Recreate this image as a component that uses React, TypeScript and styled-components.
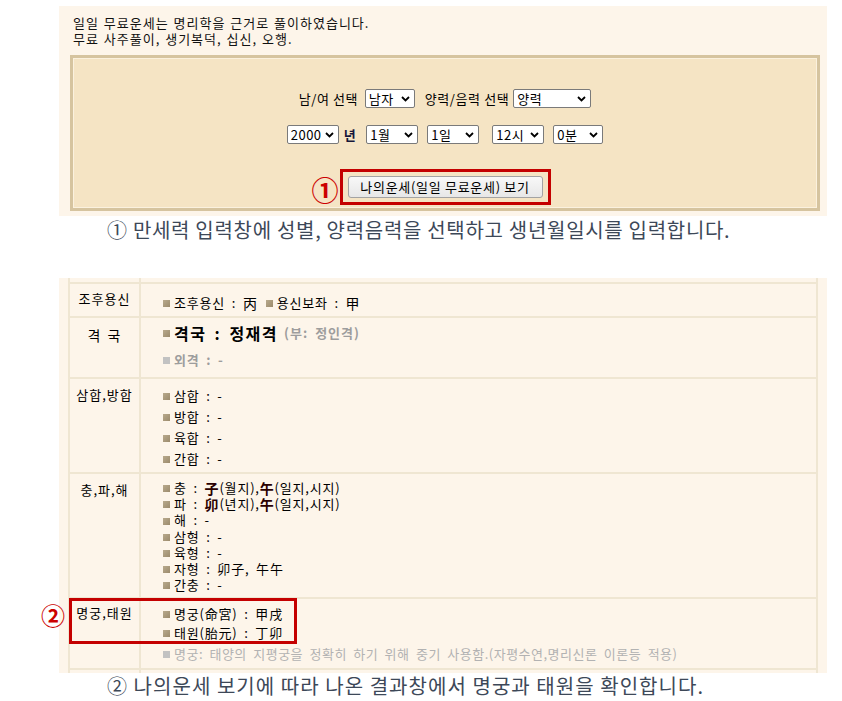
import React from "react";
import styled, { createGlobalStyle } from "styled-components";

const Global = createGlobalStyle`
  html, body { margin: 0; padding: 0; background: #ffffff; }
  body { font-family: "Noto Sans CJK KR", "Noto Sans", sans-serif; color: #000; }
`;

const Page = styled.div`
  width: 842px;
  height: 701px;
  overflow: hidden;
  display: flex;
  flex-direction: column;
`;

const TopPanel = styled.section`
  margin: 6px 0 0 59px;
  width: 768px;
  height: 210px;
  box-sizing: border-box;
  background: #fdf5ea;
  padding: 9px 0 0 11px;
`;

const Intro = styled.p`
  margin: 0;
  padding-left: 3px;
  font-size: 13px;
  line-height: 16px;
  letter-spacing: 1px;
  word-spacing: 1px;
  color: #111;
`;

const FormBox = styled.div`
  margin-top: 8px;
  width: 750px;
  height: 156px;
  box-sizing: border-box;
  border: 3px solid #d6c49f;
  box-shadow: inset 0 0 0 1px #fbf1de;
  background: #f5e4c4;
  padding-top: 30px;
  display: flex;
  flex-direction: column;
  align-items: center;
`;

const Row = styled.div<{ $mt?: number }>`
  display: flex;
  align-items: center;
  height: 20px;
  margin-top: ${(p) => p.$mt ?? 0}px;
  font-size: 13px;
  letter-spacing: 0.6px;
  color: #000;
`;

const Label = styled.span<{ $ml?: number; $bold?: boolean }>`
  margin-left: ${(p) => p.$ml ?? 0}px;
  font-weight: ${(p) => (p.$bold ? 700 : 400)};
  color: ${(p) => (p.$bold ? "#16163a" : "#000")};
  white-space: pre;
`;

const SelectWrap = styled.span<{ $w: number; $ml?: number }>`
  position: relative;
  display: inline-block;
  width: ${(p) => p.$w}px;
  height: 19px;
  margin-left: ${(p) => p.$ml ?? 0}px;
`;

const NativeSelect = styled.select`
  appearance: none;
  -webkit-appearance: none;
  width: 100%;
  height: 100%;
  box-sizing: border-box;
  border: 1px solid #7a7a7a;
  border-radius: 2px;
  background: #ffffff;
  font-family: "Noto Sans CJK KR", "Liberation Sans", sans-serif;
  font-size: 13px;
  letter-spacing: 0.5px;
  line-height: 17px;
  padding: 0 0 0 3px;
  color: #000;
  outline: none;
`;

const Chevron = styled.svg`
  position: absolute;
  right: 5px;
  top: 7px;
  width: 9px;
  height: 6px;
  pointer-events: none;
`;

const ButtonWrap = styled.div`
  position: relative;
  margin-top: 25px;
  border: 3px solid #c40000;
  padding: 4px 5px;
  display: flex;
`;

const RunButton = styled.button`
  width: 195px;
  height: 22px;
  box-sizing: border-box;
  border: 1px solid #a3a3a3;
  border-radius: 3px;
  background: linear-gradient(#f8f8f8, #e7e7e7);
  font-family: "Noto Sans CJK KR", "Liberation Sans", sans-serif;
  font-size: 13px;
  letter-spacing: 0.7px;
  line-height: 18px;
  color: #000;
  padding: 0;
`;

const Marker = styled.span<{ $size: number; $top: number; $gap: number }>`
  position: absolute;
  right: calc(100% + ${(p) => p.$gap}px);
  top: ${(p) => p.$top}px;
  font-size: ${(p) => p.$size}px;
  line-height: 1;
  font-weight: 700;
  color: #cc0000;
  white-space: nowrap;
`;

const Caption = styled.p<{ $lh: number; $ls: number }>`
  margin: 0 0 0 107px;
  font-size: 20px;
  line-height: ${(p) => p.$lh}px;
  letter-spacing: ${(p) => p.$ls}px;
  color: #3d4858;
  white-space: nowrap;
`;

const BottomPanel = styled.section`
  margin: 34px 0 0 59px;
  width: 768px;
  height: 395px;
  box-sizing: border-box;
  background: #fdf5ea;
  padding-left: 9px;
  flex-shrink: 0;
`;

const Table = styled.div`
  width: 750px;
  box-sizing: border-box;
  display: grid;
  grid-template-columns: 69px 675px;
  grid-template-rows: 4px 32px 59px 93px 123px 69px 3px;
  gap: 2px;
  padding: 0 2px;
  background: #efe6d2;
`;

const Cell = styled.div`
  background: #fdf5ea;
`;

const LabelCell = styled.div<{ $pt: number; $size?: number }>`
  position: relative;
  background: #fdf5ea;
  text-align: center;
  padding-top: ${(p) => p.$pt}px;
  font-size: ${(p) => p.$size ?? 13}px;
  letter-spacing: 1px;
  word-spacing: 2px;
  line-height: 16px;
  color: #000;
  white-space: nowrap;
`;

const ContentCell = styled.div<{ $pt: number; $lh: number }>`
  background: #fdf5ea;
  padding: ${(p) => p.$pt}px 0 0 22px;
  font-size: 13px;
  letter-spacing: 0.8px;
  word-spacing: 3px;
  line-height: ${(p) => p.$lh}px;
  color: #000;
  white-space: nowrap;
`;

const Line = styled.div<{ $mt?: number; $tone?: "main" | "muted" | "note"; $bold?: boolean; $size?: number; $ls?: number }>`
  display: flex;
  align-items: center;
  margin-top: ${(p) => p.$mt ?? 0}px;
  font-size: ${(p) => p.$size ?? 13}px;
  ${(p) => (p.$ls !== undefined ? `letter-spacing: ${p.$ls}px;` : "")}
  font-weight: ${(p) => (p.$bold ? 700 : 400)};
  color: ${(p) => (p.$tone === "muted" ? "#9d9d9d" : p.$tone === "note" ? "#b2b2b2" : "#000")};
`;

const Bullet = styled.span<{ $gray?: boolean; $ml?: number }>`
  display: inline-block;
  width: 7px;
  height: 7px;
  margin: 1px 4px 0 ${(p) => p.$ml ?? 0}px;
  background: ${(p) => (p.$gray ? "#c2c2c2" : "linear-gradient(135deg, #b8a98c, #9c8b6c)")};
  flex-shrink: 0;
`;

const Han = styled.span<{ $bold?: boolean }>`
  font-size: 14px;
  font-weight: ${(p) => (p.$bold ? 700 : 400)};
  color: ${(p) => (p.$bold ? "#2a0000" : "#000")};
`;

const Sub = styled.span`
  margin-left: 6px;
  font-size: 13px;
  letter-spacing: 1px;
  word-spacing: 3px;
  font-weight: 700;
  color: #9d9d9d;
`;

const Pre = styled.span`
  white-space: pre;
`;

const RedBox = styled.div`
  position: absolute;
  left: -1px;
  top: -1px;
  width: 228px;
  height: 46px;
  box-sizing: border-box;
  border: 3px solid #c40000;
  pointer-events: none;
`;

const ChevronIcon = () => (
  <Chevron viewBox="0 0 9 6">
    <path d="M1 1 L4.5 4.5 L8 1" fill="none" stroke="#000" strokeWidth="1.8" />
  </Chevron>
);

type SelProps = { w: number; ml?: number; options: string[] };
const Select = ({ w, ml, options }: SelProps) => (
  <SelectWrap $w={w} $ml={ml}>
    <NativeSelect defaultValue={options[0]}>
      {options.map((o) => (
        <option key={o} value={o}>
          {o}
        </option>
      ))}
    </NativeSelect>
    <ChevronIcon />
  </SelectWrap>
);

const samhap = ["삼합 : -", "방합 : -", "육합 : -", "간합 : -"];

export default function App() {
  return (
    <Page>
      <Global />
      <TopPanel>
        <Intro>
          일일 무료운세는 명리학을 근거로 풀이하였습니다.
          <br />
          무료 사주풀이, 생기복덕, 십신, 오행.
        </Intro>
        <FormBox>
          <Row>
            <Label>남/여 선택 </Label>
            <Select w={50} ml={3} options={["남자", "여자"]} />
            <Label $ml={10}>양력/음력 선택</Label>
            <Select w={78} ml={4} options={["양력", "음력", "음력(윤달)"]} />
          </Row>
          <Row $mt={16}>
            <Select w={52} options={["2000", "2001"]} />
            <Label $ml={5} $bold>
              년
            </Label>
            <Select w={52} ml={10} options={["1월", "2월"]} />
            <Select w={52} ml={9} options={["1일", "2일"]} />
            <Select w={52} ml={13} options={["12시", "1시"]} />
            <Select w={50} ml={9} options={["0분", "1분"]} />
          </Row>
          <ButtonWrap>
            <Marker $size={27} $top={4} $gap={4}>
              ①
            </Marker>
            <RunButton type="button">나의운세(일일 무료운세) 보기</RunButton>
          </ButtonWrap>
        </FormBox>
      </TopPanel>

      <Caption $lh={28} $ls={0.7}>
        ① 만세력 입력창에 성별, 양력음력을 선택하고 생년월일시를 입력합니다.
      </Caption>

      <BottomPanel>
        <Table>
          <Cell />
          <Cell />

          <LabelCell $pt={7}>조후용신</LabelCell>
          <ContentCell $pt={11} $lh={16}>
            <Line>
              <Bullet />
              <Pre>조후용신 : </Pre>
              <Han>丙</Han>
              <Bullet $ml={8} />
              <Pre>용신보좌 : </Pre>
              <Han>甲</Han>
            </Line>
          </ContentCell>

          <LabelCell $pt={9} $size={14}>
            격 국
          </LabelCell>
          <ContentCell $pt={5} $lh={20}>
            <Line $bold $size={16} $ls={1.5}>
              <Bullet />
              <Pre>격국 : 정재격</Pre>
              <Sub>(부: 정인격)</Sub>
            </Line>
            <Line $mt={7} $bold $tone="muted" $size={13}>
              <Bullet $gray />
              <Pre>외격 : -</Pre>
            </Line>
          </ContentCell>

          <LabelCell $pt={8}>삼합,방합</LabelCell>
          <ContentCell $pt={6} $lh={21}>
            {samhap.map((s) => (
              <Line key={s}>
                <Bullet />
                <Pre>{s}</Pre>
              </Line>
            ))}
          </ContentCell>

          <LabelCell $pt={8}>충,파,해</LabelCell>
          <ContentCell $pt={6} $lh={16.2}>
            <Line>
              <Bullet />
              <Pre>충 : </Pre>
              <Han $bold>子</Han>
              <Pre>(월지),</Pre>
              <Han $bold>午</Han>
              <Pre>(일지,시지)</Pre>
            </Line>
            <Line>
              <Bullet />
              <Pre>파 : </Pre>
              <Han $bold>卯</Han>
              <Pre>(년지),</Pre>
              <Han $bold>午</Han>
              <Pre>(일지,시지)</Pre>
            </Line>
            <Line>
              <Bullet />
              <Pre>해 : -</Pre>
            </Line>
            <Line>
              <Bullet />
              <Pre>삼형 : -</Pre>
            </Line>
            <Line>
              <Bullet />
              <Pre>육형 : -</Pre>
            </Line>
            <Line>
              <Bullet />
              <Pre>자형 : 卯子, 午午</Pre>
            </Line>
            <Line>
              <Bullet />
              <Pre>간충 : -</Pre>
            </Line>
          </ContentCell>

          <LabelCell $pt={6}>
            명궁,태원
            <RedBox />
            <Marker $size={24} $top={4} $gap={4}>
              ②
            </Marker>
          </LabelCell>
          <ContentCell $pt={5} $lh={19}>
            <Line>
              <Bullet />
              <Pre>명궁(命宮) : 甲戌</Pre>
            </Line>
            <Line>
              <Bullet />
              <Pre>태원(胎元) : 丁卯</Pre>
            </Line>
            <Line $mt={2} $tone="note" $size={13} $ls={0.5}>
              <Bullet $gray />
              <Pre>명궁: 태양의 지평궁을 정확히 하기 위해 중기 사용함.(자평수연,명리신론 이론등 적용)</Pre>
            </Line>
          </ContentCell>

          <Cell />
          <Cell />
        </Table>
      </BottomPanel>

      <Caption $lh={26} $ls={1.05}>
        ② 나의운세 보기에 따라 나온 결과창에서 명궁과 태원을 확인합니다.
      </Caption>
    </Page>
  );
}
